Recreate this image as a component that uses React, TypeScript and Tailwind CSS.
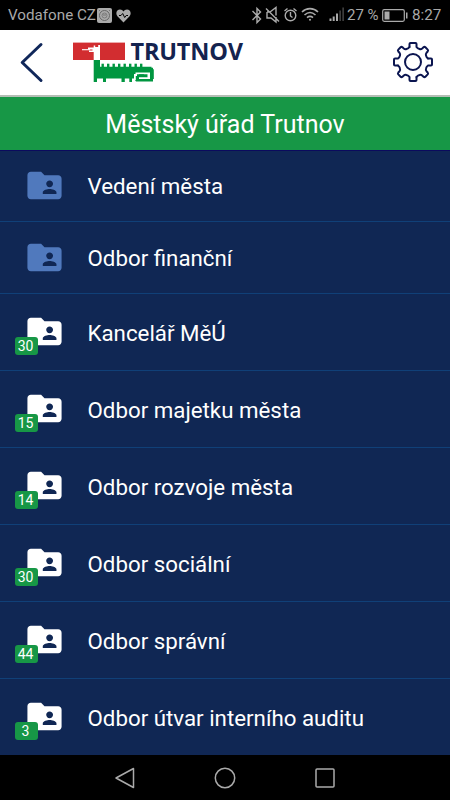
import React from "react";
import { MdFolderShared } from "react-icons/md";

const departments = [
  { name: "Vedení města", count: 0 },
  { name: "Odbor finanční", count: 0 },
  { name: "Kancelář MěÚ", count: 30 },
  { name: "Odbor majetku města", count: 15 },
  { name: "Odbor rozvoje města", count: 14 },
  { name: "Odbor sociální", count: 30 },
  { name: "Odbor správní", count: 44 },
  { name: "Odbor útvar interního auditu", count: 3 },
];

function StatusBar() {
  return (
    <div className="flex h-[30px] shrink-0 items-center bg-black pl-2 pr-[9px] pt-px text-[15.2px] text-[#a9a9a9]">
      <span className="w-[88px] whitespace-nowrap">Vodafone CZ</span>
      <svg className="ml-px" width="15" height="15" viewBox="0 0 15 15">
        <rect width="15" height="15" rx="2" fill="#aaa" />
        <g fill="none" stroke="#666">
          <circle cx="7.5" cy="7.5" r="5" />
          <circle cx="7.5" cy="7.5" r="2.5" strokeWidth=".7" />
          <path d="M2 3l1-1M12 2l1 1M6 7h3" strokeWidth=".8" />
        </g>
      </svg>
      <svg className="ml-1" width="15" height="14" viewBox="0 0 15 14">
        <path
          d="M7.5 13.5L1.4 7.2C-1 4 1 .5 4 .5c1.5 0 2.7.7 3.5 2C8.3 1.2 9.5.5 11 .5c3 0 5 3.5 2.6 6.7z"
          fill="#aaa"
        />
        <path d="M3 6.5h2l1.7-2 2 4 1.5-2H12" stroke="#000" fill="none" />
      </svg>
      <div className="ml-auto flex items-center">
        <svg width="94" height="20" viewBox="251 6 94 20" fill="none" stroke="#aaa" strokeWidth="1.4">
          <path d="M252.500 12l8 8-3.500 3.500v-14l3.500 3.500-8 8" />
          <path d="M266 9.500l13 13M267 13v6h4l5 4v-5M270 13l6-4.500v8M267 13h2" />
          <circle cx="290.500" cy="16.500" r="5.300" />
          <path d="M290.500 13v4l2 1.500M284.500 12l3-2.500M296.500 12l-3-2.500" />
          <path
            d="M302 13c4.500-4.500 11.500-4.500 16 0M304.500 16c3.500-3.200 7.500-3.200 11 0M307 18.700c2-1.700 4-1.700 6 0"
            strokeWidth="1.600"
          />
          <circle cx="310" cy="20.700" r="1" fill="#aaa" stroke="none" />
          <g stroke="none" fill="#aaa">
            <path d="M329.500 19.500h2V22h-2zM332.700 17.500h2V22h-2zM336 14.500h2V22h-2z" />
            <path d="M339.300 11.500h1.700V22h-1.700zM342.300 8.500h1.700V22h-1.700z" fill="#3c3c3c" />
          </g>
        </svg>
        <span className="ml-0.5 w-[33px] whitespace-nowrap text-[15px]">27 %</span>
        <svg className="ml-[2px]" width="26" height="13" viewBox="0 0 26 13">
          <rect x=".7" y=".7" width="21.600" height="11.600" rx="1.500" fill="none" stroke="#aaa" strokeWidth="1.200" />
          <path d="M2.500 2.500h5v8h-5zM24 3.500h1.500v6H24z" fill="#aaa" />
        </svg>
        <span className="ml-1 w-[29px] whitespace-nowrap">8:27</span>
      </div>
    </div>
  );
}

const spikes = [101.5, 107, 112.5, 118, 123.5, 129, 134.5, 140];

function Logo() {
  return (
    <svg width="176" height="54" viewBox="72 32 176 54">
      <rect x="73" y="42.600" width="52" height="17.400" fill="#d22d30" />
      {/* head and neck */}
      <path d="M93.700 60v-8H89v-1.500h3.500V49.500H88V47.500h5.700v-2h1.500v1.500h3v-2h1.800v15z" fill="#fff" />
      <path d="M82 49h8v1.300h-8z" fill="#fff" opacity=".85" />
      {/* body, spikes and feet */}
      <path
        d="M93.700 60H100v6.700H151.500v1h1.500v1.500h.8V79H153v2.500h-17l-2-3h-2V82h-2.700v-3.500h-4.500V82h-3.300v-3.500H106V82h-3v-3.500h-6V82h-3.300z"
        fill="#009640"
      />
      {spikes.map((x) => (
        <rect key={x} x={x} y="63.700" width="2.400" height="3.500" fill="#009640" />
      ))}
      {/* curl of the tail */}
      <path d="M134 80v-6h1.500v-1.500H150V79h-11v-1.700h8.500v-3H137V76h-1.200v4z" fill="#fff" />
      <path d="M139 74.300h5v1.500h-5z" fill="#009640" />
      <text
        x="130.500"
        y="60"
        textLength="112.500"
        lengthAdjust="spacing"
        fontFamily="Open Sans"
        fontSize="23.500"
        fontWeight="700"
        fill="#14234f"
      >
        TRUTNOV
      </text>
    </svg>
  );
}

function Gear() {
  const teeth = [0, 90, 180, 270];
  return (
    <svg width="42" height="42" viewBox="-21 -21 42 42" fill="none" stroke="#0b1550" strokeWidth="2" strokeLinejoin="round" strokeLinecap="round">
      <circle r="8" />
      {teeth.map((angle) => (
        <path
          key={angle}
          transform={`rotate(${angle})`}
          d="M-3.500-15v-3q0-1 1-1h5q1 0 1 1v3q1 1.500 3 2 1.500.5 2.700-.5l1.300-1.200q1-.8 1.900 0l2.300 2.300q.8.900 0 1.900l-1.200 1.300q-1 1.200-.5 2.700.5 2 2 3"
        />
      ))}
    </svg>
  );
}

export default function App() {
  return (
    <div className="flex h-[800px] w-[450px] flex-col overflow-hidden bg-[#102754] font-[Roboto,sans-serif]">
      <StatusBar />

      <header className="flex h-[67px] shrink-0 items-start justify-between border-b-2 border-[#b5beb5] bg-white pl-5 pr-4 pt-0.5">
        <div className="flex">
          <svg className="mt-2.5" width="24" height="42" viewBox="0 0 24 42">
            <path
              d="M21 2.500L2.200 20.500 21 38.500"
              fill="none"
              stroke="#10275a"
              strokeWidth="3"
              strokeLinecap="round"
              strokeLinejoin="round"
            />
          </svg>
          <div className="ml-7">
            <Logo />
          </div>
        </div>
        <div className="mt-[9px]">
          <Gear />
        </div>
      </header>

      <h1 className="z-10 -mb-px flex h-[54px] shrink-0 items-center justify-center border-b border-[#0b0a5e] bg-[#179746] pt-[3px] text-[25px] text-white">
        Městský úřad Trutnov
      </h1>

      <main className="min-h-0 flex-1 overflow-hidden">
        {departments.map((item) => (
          <div
            key={item.name}
            className={`flex items-center border-b border-[#104078] pl-[24px] ${
              item.count ? "h-[77px]" : "h-[72px]"
            }`}
          >
            <div className="relative">
              <MdFolderShared
                size={41}
                className={item.count ? "mb-[2px] text-white" : "text-[#5079bd]"}
              />
              {item.count > 0 && (
                <span className="absolute -left-[9px] top-[26px] flex h-[18px] w-[23px] items-center justify-center rounded-[3px] bg-[#179746] pr-0.5 pt-0.5 text-[14px] text-white">
                  {item.count}
                </span>
              )}
            </div>
            <span
              className={`ml-[22.5px] whitespace-nowrap text-[22.3px] text-white ${
                item.count ? "pt-[3px]" : "pt-[2px]"
              }`}
            >
              {item.name}
            </span>
          </div>
        ))}
      </main>

      <nav className="flex h-[45px] shrink-0 items-center justify-center gap-[78px] bg-black">
        <svg width="22" height="22" viewBox="0 0 22 22" fill="none" stroke="#aaa" strokeWidth="1.500" strokeLinejoin="round">
          <path d="M19.500 1.500v19L2 11z" />
        </svg>
        <svg width="22" height="22" viewBox="0 0 22 22" fill="none" stroke="#aaa" strokeWidth="1.500">
          <circle cx="11" cy="11" r="9.700" />
        </svg>
        <svg width="22" height="22" viewBox="0 0 22 22" fill="none" stroke="#aaa" strokeWidth="1.500">
          <rect x="2" y="2" width="18" height="18" rx="1" />
        </svg>
      </nav>
    </div>
  );
}
